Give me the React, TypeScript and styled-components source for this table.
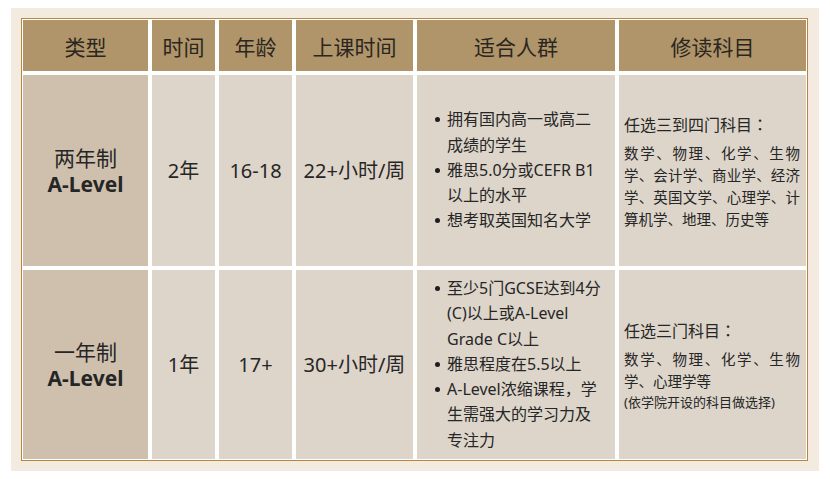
import React from "react";
import styled, { createGlobalStyle } from "styled-components";

const GlobalStyle = createGlobalStyle`
  html, body { margin: 0; padding: 0; background: #ffffff; }
  body {
    font-family: "Noto Sans", "Noto Sans CJK SC", sans-serif;
    color: #262626;
    text-spacing-trim: space-all;
  }
`;

const Page = styled.div`
  padding: 8px 11px;
`;

const Frame = styled.div`
  width: 808px;
  box-sizing: border-box;
  background: #f3ebdf;
  padding: 10px 11px 10px 10px;
`;

const Table = styled.div`
  display: grid;
  grid-template-columns: 125px 63px 73px 117px 198px 187px;
  grid-template-rows: 51px 191px 189px;
  gap: 4px;
  padding: 1px;
  border: 1px solid #b8853f;
  background: #ffffff;
`;

const HeadCell = styled.div`
  background: #b0946a;
  display: flex;
  align-items: center;
  justify-content: center;
  font-family: "Noto Sans CJK SC", sans-serif;
  font-size: 21px;
  color: #2a2620;
`;

const Cell = styled.div<{ $type?: boolean }>`
  background: ${(p) => (p.$type ? "#cfc0ae" : "#ddd5ca")};
  display: flex;
  flex-direction: column;
  align-items: center;
  justify-content: center;
  text-align: center;
  font-size: 20px;
  line-height: 27px;
  color: #262626;
`;

const TypeName = styled.span`
  font-family: "Noto Sans CJK SC", sans-serif;
  font-size: 21px;
`;

const TypeLevel = styled.span`
  font-weight: 700;
  font-size: 21px;
`;

const ListCell = styled.div`
  background: #ddd5ca;
  display: flex;
  align-items: center;
`;

const Bullets = styled.ul`
  list-style: none;
  margin: 0;
  padding: 0;
  margin-left: 30px;
  width: 157px;
  font-size: 16px;
  line-height: 25.2px;
  color: #262626;
`;

const Bullet = styled.li`
  position: relative;
  &::before {
    content: "";
    position: absolute;
    left: -12px;
    top: 10px;
    width: 5px;
    height: 5px;
    border-radius: 50%;
    background: #1e1e1e;
  }
`;

const SubjectCell = styled.div`
  background: #ddd5ca;
  display: flex;
  flex-direction: column;
  justify-content: center;
  padding: 0 6px 0 5px;
  color: #262626;
`;

const SubjectTitle = styled.div`
  font-size: 16px;
  line-height: 24px;
  margin-bottom: 5px;
`;

const Colon = styled.span`
  font-family: "Noto Sans CJK JP", sans-serif;
`;

const SubjectList = styled.div`
  font-size: 14.5px;
  line-height: 22px;
  text-align: justify;
`;

const SubjectNote = styled.div`
  font-size: 13px;
  line-height: 19px;
  margin-top: 1px;
`;

const headers = ["类型", "时间", "年龄", "上课时间", "适合人群", "修读科目"];

type Row = {
  name: string;
  duration: string;
  age: string;
  hours: string;
  fit: string[];
  title: string;
  subjects: string;
  note?: string;
};

const rows: Row[] = [
  {
    name: "两年制",
    duration: "2年",
    age: "16-18",
    hours: "22+小时/周",
    fit: ["拥有国内高一或高二成绩的学生", "雅思5.0分或CEFR B1以上的水平", "想考取英国知名大学"],
    title: "任选三到四门科目",
    subjects: "数学、物理、化学、生物学、会计学、商业学、经济学、英国文学、心理学、计算机学、地理、历史等",
  },
  {
    name: "一年制",
    duration: "1年",
    age: "17+",
    hours: "30+小时/周",
    fit: ["至少5门GCSE达到4分(C)以上或A-Level Grade C以上", "雅思程度在5.5以上", "A-Level浓缩课程，学生需强大的学习力及专注力"],
    title: "任选三门科目",
    subjects: "数学、物理、化学、生物学、心理学等",
    note: "(依学院开设的科目做选择)",
  },
];

export default function App() {
  return (
    <>
      <GlobalStyle />
      <Page>
        <Frame>
          <Table>
            {headers.map((h) => (
              <HeadCell key={h}>{h}</HeadCell>
            ))}
            {rows.map((r) => (
              <React.Fragment key={r.name}>
                <Cell $type>
                  <TypeName>{r.name}</TypeName>
                  <TypeLevel>A-Level</TypeLevel>
                </Cell>
                <Cell>{r.duration}</Cell>
                <Cell>{r.age}</Cell>
                <Cell>{r.hours}</Cell>
                <ListCell>
                  <Bullets>
                    {r.fit.map((f) => (
                      <Bullet key={f}>{f}</Bullet>
                    ))}
                  </Bullets>
                </ListCell>
                <SubjectCell>
                  <SubjectTitle>
                    {r.title}
                    <Colon>：</Colon>
                  </SubjectTitle>
                  <SubjectList>{r.subjects}</SubjectList>
                  {r.note && <SubjectNote>{r.note}</SubjectNote>}
                </SubjectCell>
              </React.Fragment>
            ))}
          </Table>
        </Frame>
      </Page>
    </>
  );
}
